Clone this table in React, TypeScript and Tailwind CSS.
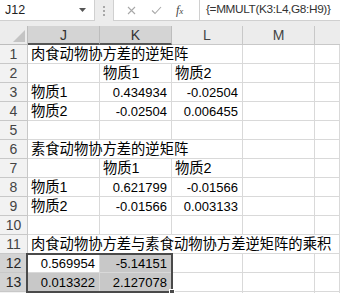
import React from "react";

type Cell = { t?: string; w: string; num?: boolean; bg?: string };

const GRID = "border-[#d9d9d9]";

function Row({ n, cells, hl }: { n?: number; cells: Cell[]; hl?: boolean }) {
  return (
    <div className="flex h-[19px]">
      <div
        className={`w-[28px] shrink-0 border-r border-b border-[#c8c8c8] flex items-center justify-center text-[14px] leading-none ${
          hl ? "bg-[#d3d3d3] text-[#262626]" : "bg-[#f2f2f2] text-[#444]"
        }`}
      >
        {n ?? ""}
      </div>
      {cells.map((c, i) => (
        <div
          key={i}
          className={`${c.w} ${c.bg ?? "bg-white"} border-r border-b ${GRID} flex items-center whitespace-nowrap overflow-visible text-black ${
            c.num ? "justify-end pr-[4px] text-[13px]" : "justify-start pl-[3px] text-[14.3px]"
          } leading-none`}
        >
          {c.t ?? ""}
        </div>
      ))}
    </div>
  );
}

const J = "w-[72px] shrink-0";
const K = "w-[72px] shrink-0";
const L = "w-[71px] shrink-0";
const M = "w-[72px] shrink-0";
const N = "flex-1 min-w-0";
const JKL = "w-[215px] shrink-0";
const ALL = "flex-1 min-w-0";

export default function App() {
  return (
    <div className="w-[340px] h-[293px] overflow-hidden bg-white font-['Liberation_Sans','Noto_Sans_CJK_SC',sans-serif]">
      {/* formula bar */}
      <div className="h-[26px] bg-[#ececec] flex items-start">
        <div className="w-[95px] h-[21px] bg-white border-r border-b border-[#d0d0d0] flex items-center pl-[5px] text-[12.5px] text-[#222]">
          J12
          <svg className="ml-auto mr-[8px]" width="7" height="4" viewBox="0 0 7 4">
            <path d="M0 0 L7 0 L3.5 4 Z" fill="#555" />
          </svg>
        </div>
        <div className="w-[18px] h-[21px] flex flex-col items-center justify-center gap-[2px]">
          <div className="w-[2px] h-[2px] bg-[#a8a8a8]" />
          <div className="w-[2px] h-[2px] bg-[#a8a8a8]" />
          <div className="w-[2px] h-[2px] bg-[#a8a8a8]" />
        </div>
        <div className="w-[87px] h-[21px] bg-white border-l border-r border-b border-[#d0d0d0] flex items-center">
          <svg className="ml-[13px]" width="9" height="9" viewBox="0 0 9 9">
            <path d="M1 1 L8 8 M8 1 L1 8" stroke="#a8a8a8" strokeWidth="1.1" />
          </svg>
          <svg className="ml-[15px]" width="11" height="9" viewBox="0 0 11 9">
            <path d="M1 4.5 L4 7.5 L10 1" stroke="#a8a8a8" strokeWidth="1.1" fill="none" />
          </svg>
          <span className="ml-[14px] font-['Liberation_Serif',serif] italic text-[12px] text-[#444] leading-none">
            f<span className="text-[9px]">x</span>
          </span>
        </div>
        <div className="flex-1 h-[21px] bg-white border-b border-[#d0d0d0] flex items-center pl-[6px] text-[11.8px] tracking-[-0.35px] text-[#333] whitespace-nowrap overflow-hidden">
          {"{=MMULT(K3:L4,G8:H9)}"}
        </div>
      </div>

      {/* grid */}
      <div className="relative">
        {/* column headers */}
        <div className="flex h-[19px] text-[14px] leading-none">
          <div className="w-[28px] shrink-0 bg-[#ececec] border-r border-b border-[#bdbdbd] relative">
            <svg className="absolute right-[2px] bottom-[2px]" width="12" height="12" viewBox="0 0 12 12">
              <path d="M12 0 L12 12 L0 12 Z" fill="#c4c4c4" />
            </svg>
          </div>
          <div className={`${J} bg-[#d4d4d4] border-r border-[#bdbdbd] border-b-2 border-b-[#555] flex items-center justify-center text-[#333]`}>J</div>
          <div className={`${K} bg-[#d4d4d4] border-r border-[#bdbdbd] border-b-2 border-b-[#555] flex items-center justify-center text-[#333]`}>K</div>
          <div className={`${L} bg-[#ececec] border-r border-b border-[#c8c8c8] flex items-center justify-center text-[#444]`}>L</div>
          <div className={`${M} bg-[#ececec] border-r border-b border-[#c8c8c8] flex items-center justify-center text-[#444]`}>M</div>
          <div className={`${N} bg-[#ececec] border-b border-[#c8c8c8]`} />
        </div>

        <Row n={1} cells={[{ t: "肉食动物协方差的逆矩阵", w: JKL }, { w: M }, { w: N }]} />
        <Row n={2} cells={[{ w: J }, { t: "物质1", w: K }, { t: "物质2", w: L }, { w: M }, { w: N }]} />
        <Row n={3} cells={[{ t: "物质1", w: J }, { t: "0.434934", w: K, num: true }, { t: "-0.02504", w: L, num: true }, { w: M }, { w: N }]} />
        <Row n={4} cells={[{ t: "物质2", w: J }, { t: "-0.02504", w: K, num: true }, { t: "0.006455", w: L, num: true }, { w: M }, { w: N }]} />
        <Row n={5} cells={[{ w: J }, { w: K }, { w: L }, { w: M }, { w: N }]} />
        <Row n={6} cells={[{ t: "素食动物协方差的逆矩阵", w: JKL }, { w: M }, { w: N }]} />
        <Row n={7} cells={[{ w: J }, { t: "物质1", w: K }, { t: "物质2", w: L }, { w: M }, { w: N }]} />
        <Row n={8} cells={[{ t: "物质1", w: J }, { t: "0.621799", w: K, num: true }, { t: "-0.01566", w: L, num: true }, { w: M }, { w: N }]} />
        <Row n={9} cells={[{ t: "物质2", w: J }, { t: "-0.01566", w: K, num: true }, { t: "0.003133", w: L, num: true }, { w: M }, { w: N }]} />
        <Row n={10} cells={[{ w: J }, { w: K }, { w: L }, { w: M }, { w: N }]} />
        <Row n={11} cells={[{ t: "肉食动物协方差与素食动物协方差逆矩阵的乘积", w: ALL }]} />
        <Row n={12} hl cells={[{ t: "0.569954", w: J, num: true }, { t: "-5.14151", w: K, num: true, bg: "bg-[#c8c8c8]" }, { w: L }, { w: M }, { w: N }]} />
        <Row n={13} hl cells={[{ t: "0.013322", w: J, num: true, bg: "bg-[#c8c8c8]" }, { t: "2.127078", w: K, num: true, bg: "bg-[#c8c8c8]" }, { w: L }, { w: M }, { w: N }]} />
        <Row cells={[{ w: J }, { w: K }, { w: L }, { w: M }, { w: N }]} />

        {/* selection outline */}
        <div className="absolute left-[26px] top-[227px] w-[147px] h-[40px] border-2 border-[#4a4a4a] pointer-events-none" />
        <div className="absolute left-[169px] top-[263px] w-[6px] h-[6px] bg-[#4a4a4a] border border-white pointer-events-none" />
      </div>
    </div>
  );
}
